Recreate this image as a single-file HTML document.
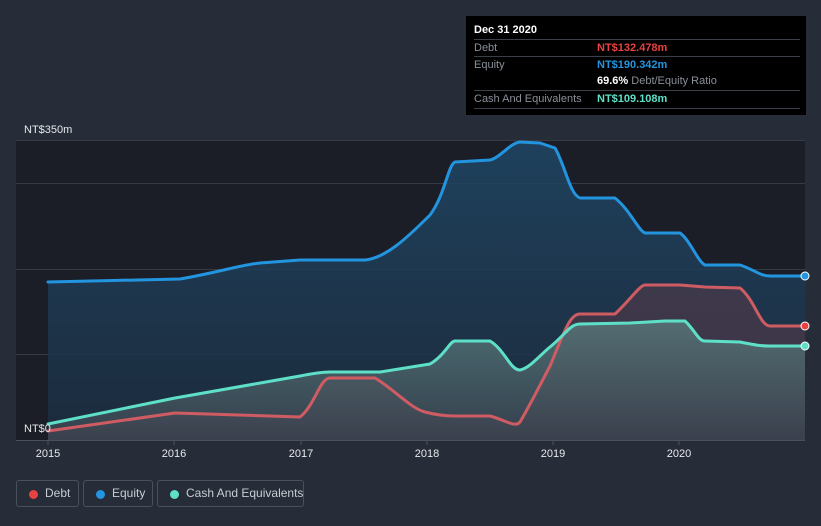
<!DOCTYPE html>
<html style="height:526px;overflow:hidden"><head><meta charset="utf-8"><style>
body{margin:0;width:821px;height:526px;background:#262c38;font-family:"Liberation Sans",sans-serif;overflow:hidden;position:relative}
.tip{position:absolute;left:466px;top:16px;width:340px;height:99px;background:#000;}
.tip .r{position:absolute;left:8px;width:326px;font-size:11px;color:#8a8f98;height:17px;line-height:17px}
.lg{position:absolute;top:480px;height:27px;border:1px solid #4a505c;border-radius:3px;color:#c8ccd2;font-size:12px;line-height:25px;box-sizing:border-box;white-space:nowrap}
.lg i{position:absolute;left:12px;top:9px;width:9px;height:9px;border-radius:50%}
</style></head><body>
<svg width="821" height="526" style="position:absolute;left:0;top:0">
<defs>
<linearGradient id="eq" x1="0" y1="0" x2="0" y2="1"><stop offset="0" stop-color="#1f4766"/><stop offset="1" stop-color="#1c2d40"/></linearGradient>
<linearGradient id="ca" x1="0" y1="0" x2="0" y2="1"><stop offset="0" stop-color="#587a7c"/><stop offset="1" stop-color="#3a4450"/></linearGradient>
</defs>
<rect x="16" y="140" width="789" height="300" fill="#1b1e26"/>
<g stroke="#343a46" stroke-width="1">
<line x1="16" y1="140.5" x2="805" y2="140.5"/><line x1="16" y1="183.5" x2="805" y2="183.5"/><line x1="16" y1="269.5" x2="805" y2="269.5"/><line x1="16" y1="354.5" x2="805" y2="354.5"/><line x1="16" y1="440.5" x2="805" y2="440.5" stroke="#4a505c"/>
</g>
<path d="M48,282 L180,279 C220,272 240,265 260,263 L300,260 L365,260 C385,258 405,240 430,215 C445,195 448,165 455,162 L490,160 C500,158 510,143 520,142 L540,143 L555,148 C565,165 570,195 580,198 L615,198 C630,210 638,230 645,233 L680,233 C690,240 698,262 705,265 L740,265 C755,270 760,276 770,276 L805,276 L805,440 L48,440 Z" fill="url(#eq)" fill-opacity=".85"/>
<path d="M48,431 L175,413 L300,417 C315,405 320,378 330,378 L375,378 C395,390 410,408 425,412 C440,416 450,416 455,416 L490,416 C505,420 515,428 520,422 C530,405 540,385 550,366 C565,330 570,314 580,314 L615,314 C630,300 640,285 645,285 L680,285 L705,287 L740,288 C755,300 760,326 770,326 L805,326 L805,440 L48,440 Z" fill="#5a3a4a" fill-opacity=".55"/>
<path d="M48,424 L175,398 L300,376 C310,374 320,372 330,372 L380,372 L430,364 C445,355 450,341 455,341 L490,341 C505,350 510,370 520,370 C530,368 540,355 550,347 C565,335 570,324 580,324 L630,323 L665,321 L685,321 C695,330 698,341 705,341 L740,342 C755,345 760,346 770,346 L805,346 L805,440 L48,440 Z" fill="url(#ca)" fill-opacity=".8"/>
<g fill="none" stroke-width="3" stroke-linejoin="round" stroke-linecap="round">
<path d="M48,282 L180,279 C220,272 240,265 260,263 L300,260 L365,260 C385,258 405,240 430,215 C445,195 448,165 455,162 L490,160 C500,158 510,143 520,142 L540,143 L555,148 C565,165 570,195 580,198 L615,198 C630,210 638,230 645,233 L680,233 C690,240 698,262 705,265 L740,265 C755,270 760,276 770,276 L805,276" stroke="#2394df"/>
<path d="M48,431 L175,413 L300,417 C315,405 320,378 330,378 L375,378 C395,390 410,408 425,412 C440,416 450,416 455,416 L490,416 C505,420 515,428 520,422 C530,405 540,385 550,366 C565,330 570,314 580,314 L615,314 C630,300 640,285 645,285 L680,285 L705,287 L740,288 C755,300 760,326 770,326 L805,326" stroke="#cf5c63"/>
<path d="M48,424 L175,398 L300,376 C310,374 320,372 330,372 L380,372 L430,364 C445,355 450,341 455,341 L490,341 C505,350 510,370 520,370 C530,368 540,355 550,347 C565,335 570,324 580,324 L630,323 L665,321 L685,321 C695,330 698,341 705,341 L740,342 C755,345 760,346 770,346 L805,346" stroke="#5ee0c8"/>
</g>
<circle cx="805" cy="276" r="4" fill="#2394df" stroke="#fff" stroke-width="1"/>
<circle cx="805" cy="326" r="4" fill="#e84142" stroke="#fff" stroke-width="1"/>
<circle cx="805" cy="346" r="4" fill="#5ee0c8" stroke="#fff" stroke-width="1"/>
<g stroke="#4a505c"><line x1="48" y1="440" x2="48" y2="445"/><line x1="174" y1="440" x2="174" y2="445"/><line x1="301" y1="440" x2="301" y2="445"/><line x1="427" y1="440" x2="427" y2="445"/><line x1="553" y1="440" x2="553" y2="445"/><line x1="679" y1="440" x2="679" y2="445"/></g>
<g fill="#e6e8eb" font-size="11" font-family="Liberation Sans,sans-serif" text-anchor="middle">
<text x="48" y="457">2015</text><text x="174" y="457">2016</text><text x="301" y="457">2017</text><text x="427" y="457">2018</text><text x="553" y="457">2019</text><text x="679" y="457">2020</text>
</g>
<text x="24" y="133" fill="#e6e8eb" font-size="11">NT$350m</text>
<text x="24" y="432" fill="#e6e8eb" font-size="11">NT$0</text>
</svg>
<div class="tip">
<div class="r" style="top:6px;color:#fff;font-weight:bold">Dec 31 2020</div>
<div class="r" style="top:23px;border-top:1px solid #3a3f48">Debt<span style="position:absolute;left:123px;color:#e84142;font-weight:bold">NT$132.478m</span></div>
<div class="r" style="top:40px;border-top:1px solid #3a3f48">Equity<span style="position:absolute;left:123px;color:#2394df;font-weight:bold">NT$190.342m</span></div>
<div class="r" style="top:57px"><span style="position:absolute;left:123px"><b style="color:#fff">69.6%</b> Debt/Equity Ratio</span></div>
<div class="r" style="top:74px;border-top:1px solid #3a3f48;border-bottom:1px solid #3a3f48">Cash And Equivalents<span style="position:absolute;left:123px;color:#5ee0c8;font-weight:bold">NT$109.108m</span></div>
</div>
<div class="lg" style="left:16px;width:63px"><i style="background:#e84142"></i><span style="position:absolute;left:28px">Debt</span></div>
<div class="lg" style="left:83px;width:70px"><i style="background:#2394df"></i><span style="position:absolute;left:28px">Equity</span></div>
<div class="lg" style="left:157px;width:147px"><i style="background:#5ee0c8"></i><span style="position:absolute;left:28px">Cash And Equivalents</span></div>
</body></html>
